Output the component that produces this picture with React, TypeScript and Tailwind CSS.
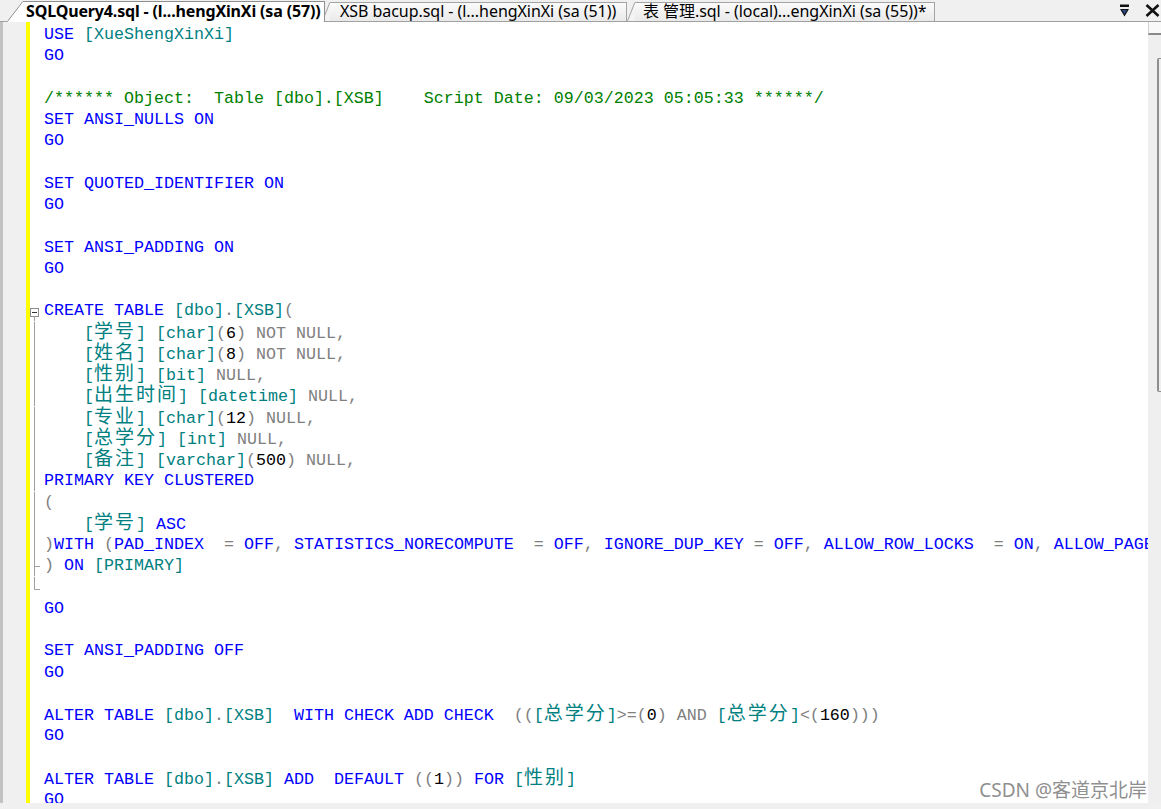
import React from "react";

// token types: k keyword, i identifier, g gray operator, n number, c comment, s plain
const tone: Record<string, string> = {
  k: "text-[#0000ff]",
  i: "text-[#008080]",
  g: "text-[#808080]",
  n: "text-black",
  c: "text-[#008000]",
  s: "",
};

const code: string[] = [
  "k:USE|s: |i:[XueShengXinXi]",
  "k:GO",
  "",
  "c:/****** Object:  Table [dbo].[XSB]    Script Date: 09/03/2023 05:05:33 ******/",
  "k:SET ANSI_NULLS ON",
  "k:GO",
  "",
  "k:SET QUOTED_IDENTIFIER ON",
  "k:GO",
  "",
  "k:SET ANSI_PADDING ON",
  "k:GO",
  "",
  "k:CREATE TABLE|s: |i:[dbo]|g:.|i:[XSB]|g:(",
  "s:    |i:[学号]|s: |i:[char]|g:(|n:6|g:)|s: |g:NOT NULL,",
  "s:    |i:[姓名]|s: |i:[char]|g:(|n:8|g:)|s: |g:NOT NULL,",
  "s:    |i:[性别]|s: |i:[bit]|s: |g:NULL,",
  "s:    |i:[出生时间]|s: |i:[datetime]|s: |g:NULL,",
  "s:    |i:[专业]|s: |i:[char]|g:(|n:12|g:)|s: |g:NULL,",
  "s:    |i:[总学分]|s: |i:[int]|s: |g:NULL,",
  "s:    |i:[备注]|s: |i:[varchar]|g:(|n:500|g:)|s: |g:NULL,",
  "k:PRIMARY KEY CLUSTERED",
  "g:(",
  "s:    |i:[学号]|s: |k:ASC",
  "g:)|k:WITH|s: |g:(|k:PAD_INDEX|s:  |g:=|s: |k:OFF|g:,|s: |k:STATISTICS_NORECOMPUTE|s:  |g:=|s: |k:OFF|g:,|s: |k:IGNORE_DUP_KEY|s: |g:=|s: |k:OFF|g:,|s: |k:ALLOW_ROW_LOCKS|s:  |g:=|s: |k:ON|g:,|s: |k:ALLOW_PAGE_LOCKS|s:  |g:=|s: |k:ON|g:)|s: |k:ON|s: |i:[PRIMARY]",
  "g:)|s: |k:ON|s: |i:[PRIMARY]",
  "",
  "k:GO",
  "",
  "k:SET ANSI_PADDING OFF",
  "k:GO",
  "",
  "k:ALTER TABLE|s: |i:[dbo]|g:.|i:[XSB]|s:  |k:WITH CHECK ADD CHECK|s:  |g:((|i:[总学分]|g:>=(|n:0|g:)|s: |g:AND|s: |i:[总学分]|g:<(|n:160|g:)))",
  "k:GO",
  "",
  "k:ALTER TABLE|s: |i:[dbo]|g:.|i:[XSB]|s: |k:ADD|s:  |k:DEFAULT|s: |g:((|n:1|g:))|s: |k:FOR|s: |i:[性别]",
  "k:GO",
];

const markerFor = (n: number) => {
  if (n === 14) return "open";
  if (n >= 15 && n <= 25) return "bar";
  if (n === 26) return "tick";
  if (n === 27) return "end";
  return "";
};

const Marker = ({ kind }: { kind: string }) => {
  if (!kind) return <div className="w-[14px] shrink-0" />;
  return (
    <svg width="14" height="21.25" viewBox="0 0 14 21.25" className="block shrink-0">
      {kind === "open" && (
        <>
          <rect x="0.5" y="8.5" width="8" height="8" fill="#ffffff" stroke="#8c8c8c" />
          <line x1="2" y1="12.5" x2="7" y2="12.5" stroke="#333333" />
          <line x1="4.5" y1="16.5" x2="4.5" y2="21.25" stroke="#a0a0a0" />
        </>
      )}
      {(kind === "bar" || kind === "tick") && (
        <line x1="4.5" y1="0" x2="4.5" y2="21.25" stroke="#a0a0a0" />
      )}
      {kind === "tick" && <line x1="4.5" y1="11.5" x2="10" y2="11.5" stroke="#a0a0a0" />}
      {kind === "end" && (
        <path d="M4.5 0 V12.5 H10" fill="none" stroke="#a0a0a0" />
      )}
    </svg>
  );
};

const renderText = (text: string) =>
  text.split(/([\u4e00-\u9fff]+)/).map((part, i) =>
    /[\u4e00-\u9fff]/.test(part) ? (
      <span
        key={i}
        className="font-['Noto_Sans_CJK_SC',sans-serif] text-[19px] leading-[15px] tracking-[2px]"
      >
        {part}
      </span>
    ) : (
      part
    )
  );

const CodeLine = ({ src, n }: { src: string; n: number }) => (
  <div className="flex h-[21.25px] shrink-0">
    <Marker kind={markerFor(n)} />
    <div className="whitespace-pre">
      {src
        ? src.split("|").map((tok, i) => {
            const at = tok.indexOf(":");
            const type = tok.slice(0, at);
            const text = tok.slice(at + 1);
            return (
              <span key={i} className={tone[type]}>
                {renderText(text)}
              </span>
            );
          })
        : " "}
    </div>
  </div>
);

const Tab = ({
  label,
  active,
  bodyClass,
  className = "",
}: {
  label: string;
  active?: boolean;
  bodyClass: string;
  className?: string;
}) => (
  <div
    className={`flex shrink-0 ${
      active ? "relative z-10 h-[21px] -mb-px" : "h-[19px]"
    } ${className}`}
  >
    {active ? (
      <svg width="16" height="21" className="block shrink-0">
        <path d="M0 21 L15.5 0 L16 0 L16 21 Z" fill="#ffffff" />
        <path d="M0.5 20.5 L15.8 0.5" stroke="#8f8f8f" fill="none" />
      </svg>
    ) : (
      <svg width="8" height="19" className="block shrink-0">
        <path d="M0 19 L8 0 L8 19 Z" fill="#f3f3f3" />
        <path d="M0.5 19 L7.8 0.5" stroke="#a4a4a4" fill="none" />
      </svg>
    )}
    <div
      className={`h-full border-t border-r whitespace-nowrap text-black text-[16px] font-['Noto_Sans','Noto_Sans_CJK_SC',sans-serif] ${
        active
          ? "bg-white border-[#8f8f8f] font-bold leading-[19px] tracking-[-0.15px]"
          : "bg-linear-to-b from-[#fbfbfb] to-[#e9e9e9] border-[#a4a4a4] leading-[16px] tracking-[-0.05px]"
      } ${bodyClass}`}
    >
      {label}
    </div>
  </div>
);

export default function App() {
  return (
    <div className="w-[1161px] h-[809px] bg-white flex flex-col overflow-hidden">
      {/* tab strip */}
      <div className="h-[22px] shrink-0 flex items-end bg-[#f0f0f0] border-b border-[#a0a0a0] pl-[7px]">
        <Tab
          active
          label="SQLQuery4.sql - (l...hengXinXi (sa (57))"
          bodyClass="w-[302px] pl-[3px]"
        />
        <Tab
          label="XSB bacup.sql - (l...hengXinXi (sa (51))"
          bodyClass="w-[297px] pl-[10px]"
          className="-ml-[3px]"
        />
        <Tab
          label="表 管理.sql - (local)...engXinXi (sa (55))*"
          bodyClass="w-[300px] pl-[8px]"
        />
        <div className="ml-auto self-stretch flex items-center gap-[16px] pr-[1px]">
          <svg width="9" height="13" viewBox="0 0 9 13" className="block">
            <rect x="0" y="0.5" width="9" height="2.5" fill="#111111" />
            <path d="M0 5 H9 L4.5 12.5 Z" fill="#111111" />
            <path d="M2 6 H7 L4.5 10 Z" fill="#2a4a8a" />
          </svg>
          <svg width="15" height="13" viewBox="0 0 15 13" className="block">
            <path d="M1.5 1 L13.5 12 M13.5 1 L1.5 12" stroke="#111111" strokeWidth="2.6" />
          </svg>
        </div>
      </div>

      {/* editor */}
      <div className="flex h-[781px] shrink-0">
        <div className="w-[26px] shrink-0 bg-[#f0f0f0] border-l-[3px] border-[#c2c2c2]" />
        <div className="w-[4px] shrink-0 bg-[#ffff00]" />
        <div className="relative flex-1 flex flex-col overflow-hidden bg-white pt-[2px] font-['Liberation_Mono',monospace] text-[16.67px] leading-[21.25px]">
          {code.map((src, i) => (
            <CodeLine key={i} src={src} n={i + 1} />
          ))}
          <div className="absolute right-[1px] bottom-[2px] text-[#8f8f8f] text-[19px] leading-[22px] font-['Noto_Sans','Noto_Sans_CJK_SC',sans-serif]">
            CSDN @客道京北岸
          </div>
        </div>
        <div className="w-[13px] shrink-0 bg-[#efefef] flex flex-col">
          <div className="h-[13px] shrink-0 bg-[#f9f9f9] border-l border-b-2 border-[#8a8a8a] border-l-[#d0d0d0]" />
          <div className="mt-[23px] ml-[9px] h-[334px] w-[4px] border-l-2 border-t border-b border-[#8f8f8f] rounded-tl-[2px] rounded-bl-[2px]" />
        </div>
      </div>

      <div className="h-[6px] shrink-0 bg-[#f0f0f0]" />
    </div>
  );
}
